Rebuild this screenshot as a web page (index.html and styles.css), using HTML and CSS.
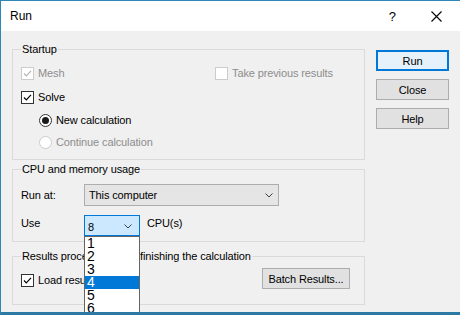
FILE: index.html
```html
<!DOCTYPE html>
<html>
	<head lang="en">
		<meta charset="UTF-8">
		<title>Run</title>
		<link rel="stylesheet" href="styles.css">
	</head>
	<body>
		<div class="window">
			<div class="titlebar">
				<span class="title">Run</span>
				<span class="help">?</span>
				<span class="close">
					<svg width="11" height="11" viewBox="0 0 11 11"><path d="M0.5 0.5L10.5 10.5M10.5 0.5L0.5 10.5" stroke="#000" stroke-width="1.1" fill="none"/></svg>
				</span>
			</div>

			<div class="main">
				<div class="groups">
					<!-- Startup -->
					<fieldset class="group startup">
						<legend>Startup</legend>
						<div class="row row-a">
							<div class="check disabled mesh">
								<span class="box"><svg width="11" height="11" viewBox="0 0 11 11"><path d="M2 5.5L4.3 7.8L9 2.8" stroke="#b4b4b4" stroke-width="1.2" fill="none"/></svg></span>
								<span>Mesh</span>
							</div>
							<div class="check disabled">
								<span class="box"></span>
								<span>Take previous results</span>
							</div>
						</div>
						<div class="row row-a">
							<div class="check">
								<span class="box"><svg width="11" height="11" viewBox="0 0 11 11"><path d="M2 5.5L4.3 7.8L9 2.8" stroke="#000" stroke-width="1.2" fill="none"/></svg></span>
								<span>Solve</span>
							</div>
						</div>
						<div class="row row-b indent">
							<div class="radio on">
								<span class="dot"></span>
								<span>New calculation</span>
							</div>
						</div>
						<div class="row row-b indent">
							<div class="radio disabled">
								<span class="dot"></span>
								<span>Continue calculation</span>
							</div>
						</div>
					</fieldset>

					<!-- CPU -->
					<fieldset class="group cpu">
						<legend>CPU and memory usage</legend>
						<div class="field field-run">
							<span class="field-label">Run at:</span>
							<div class="combo wide">
								<span>This computer</span>
								<svg width="8" height="5" viewBox="0 0 8 5"><path d="M0.5 0.5L4 4L7.5 0.5" stroke="#404040" fill="none"/></svg>
							</div>
						</div>
						<div class="field field-use">
							<span class="field-label">Use</span>
							<div class="combo-wrap">
								<div class="combo active">
									<span>8</span>
									<svg width="8" height="5" viewBox="0 0 8 5"><path d="M0.5 0.5L4 4L7.5 0.5" stroke="#404040" fill="none"/></svg>
								</div>
								<ul class="droplist">
									<li>1</li>
									<li>2</li>
									<li>3</li>
									<li class="selected">4</li>
									<li>5</li>
									<li>6</li>
									<li>7</li>
									<li>8</li>
								</ul>
							</div>
							<span class="unit">CPU(s)</span>
						</div>
					</fieldset>

					<!-- Results -->
					<fieldset class="group results">
						<legend>Results processing after finishing the calculation</legend>
						<div class="results-row">
							<div class="check">
								<span class="box"><svg width="11" height="11" viewBox="0 0 11 11"><path d="M2 5.5L4.3 7.8L9 2.8" stroke="#000" stroke-width="1.2" fill="none"/></svg></span>
								<span>Load results</span>
							</div>
							<button class="btn batch">Batch Results...</button>
						</div>
					</fieldset>
				</div>

				<div class="buttons">
					<button class="btn default">Run</button>
					<button class="btn">Close</button>
					<button class="btn">Help</button>
				</div>
			</div>
		</div>
	</body>
</html>
```

FILE: styles.css
```css
*{
	padding: 0;
	margin: 0;
	box-sizing: border-box;
}
html,body{
	width: 460px;
	height: 315px;
	overflow: hidden;
	background: #f0f0f0;
}
body{
	font-family: "Liberation Sans", Arial, sans-serif;
	font-size: 11px;
	letter-spacing: -0.12px;
	color: #000;
}

.window{
	width: 460px;
	height: 315px;
	overflow: hidden;
	background: #f0f0f0;
	border-top: 1px solid #2f87b6;
	border-left: 1px solid #2f87b6;
	border-bottom: 3px solid #2c7aa3;
}

/* title bar */
.titlebar{
	height: 30px;
	background: #fff;
	display: flex;
	align-items: center;
	font-size: 12px;
	letter-spacing: 0;
}
.titlebar .title{
	padding-left: 9px;
	flex: 1;
}
.titlebar .help{
	margin-right: 35px;
	font-size: 13px;
}
.titlebar .close{
	display: flex;
	margin-right: 18px;
}

.main{
	display: flex;
	padding: 11px 0 0 11px;
}
.groups{
	width: 353px;
	position: relative;
}

/* group boxes */
.group{
	border: 1px solid #dadada;
	padding: 0 8px;
}
.group legend{
	line-height: 15px;
	padding: 0 1px;
	margin-left: 0;
}
.startup{
	padding-top: 4px;
	padding-bottom: 6px;
}
.cpu{
	margin-top: 2px;
	padding-top: 7px;
	padding-bottom: 5px;
}
.results{
	margin-top: 7px;
	padding-top: 4px;
	padding-bottom: 15px;
}

.row{
	display: flex;
	align-items: center;
}
.row-a{
	height: 24px;
}
.row-b{
	height: 22px;
}
.indent{
	padding-left: 18px;
}

.check,.radio{
	display: flex;
	align-items: center;
}
.check .box{
	width: 13px;
	height: 13px;
	border: 1px solid #333;
	background: #fff;
	margin-right: 4px;
	display: flex;
	align-items: center;
	justify-content: center;
}
.check.disabled{
	color: #8d8d8d;
}
.check.disabled .box{
	border-color: #cccccc;
}
.check.mesh{
	width: 194px;
}

.radio .dot{
	width: 13px;
	height: 13px;
	border: 1px solid #333;
	border-radius: 50%;
	background: #fff;
	margin-right: 4px;
	display: flex;
	align-items: center;
	justify-content: center;
}
.radio.on .dot::after{
	content: "";
	width: 7px;
	height: 7px;
	border-radius: 50%;
	background: #1a1a1a;
}
.radio.disabled{
	color: #8d8d8d;
}
.radio.disabled .dot{
	border-color: #cccccc;
}

/* CPU fields */
.field{
	display: flex;
}
.field-label{
	width: 63px;
}
.field-run{
	height: 22px;
	align-items: center;
}
.field-use{
	margin-top: 9px;
	height: 21px;
}
.field-use .field-label,.field-use .unit{
	line-height: 14px;
	padding-top: 1px;
}
.field-use .unit{
	margin-left: 7px;
}

.combo{
	display: flex;
	align-items: center;
	justify-content: space-between;
	border: 1px solid #adadad;
	background: #e5e5e5;
	padding: 0 5px 0 4px;
}
.combo.wide{
	width: 195px;
	height: 22px;
}
.combo.active{
	width: 56px;
	height: 21px;
	border-color: #0078d7;
	background: #cce8ff;
	padding: 2px 7px 0 3px;
}
.combo-wrap{
	position: relative;
}
.droplist{
	position: absolute;
	top: 21px;
	left: 0;
	width: 56px;
	list-style: none;
	background: #fff;
	border: 1px solid #646464;
	font-size: 14px;
	letter-spacing: 0;
	z-index: 5;
}
.droplist li{
	height: 13px;
	line-height: 13px;
	padding-left: 2px;
}
.droplist li.selected{
	background: #0078d7;
	color: #fff;
}

/* results */
.results-row{
	display: flex;
	align-items: center;
	height: 21px;
}
.results-row .check{
	margin-top: 3px;
}
.batch{
	margin-left: auto;
	margin-right: 6px;
	width: 88px;
}

/* buttons */
.btn{
	font-family: inherit;
	font-size: 11px;
	letter-spacing: -0.12px;
	color: #000;
	height: 21px;
	background: #e1e1e1;
	border: 1px solid #adadad;
	outline: none;
}
.buttons{
	display: flex;
	flex-direction: column;
	margin-left: 11px;
	padding-top: 8px;
	gap: 8px;
}
.buttons .btn{
	width: 73px;
}
.btn.default{
	border: 2px solid #0078d7;
	background: #e5f1fb;
}
```
